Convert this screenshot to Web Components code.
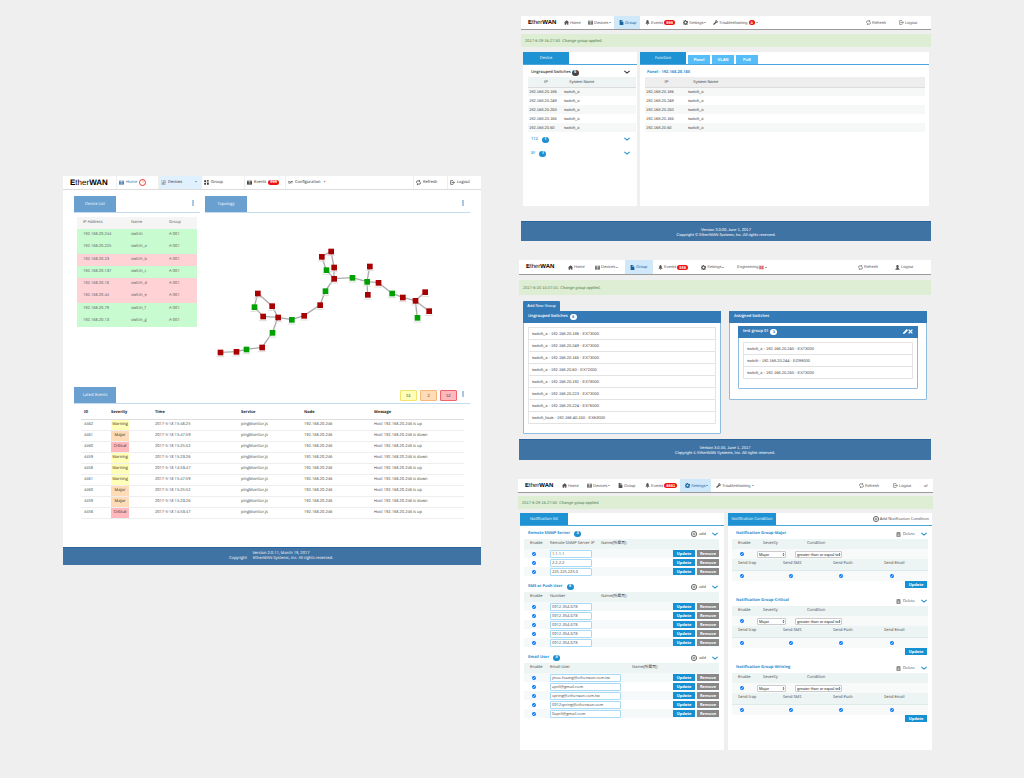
<!DOCTYPE html>
<html lang="en">
<head>
<meta charset="utf-8">
<title>EtherWAN network management screens</title>
<style>
  html { background: #efefef; }
  body { margin: 0; font: 4px/6px "Liberation Sans", Arial, sans-serif; color: #333; text-rendering: geometricPrecision; }
</style>
</head>
<body>
<ew-board>
  <ew-screen slot="overview" class="overview">
    <ew-nav size="large" style="--cols:53px 42px 43px 43px 41px 1fr 34px 34px">
      <ew-nav-item icon="grid" label="Home" ring="1" tone="link"></ew-nav-item>
      <ew-nav-item icon="list" label="Devices" active plus></ew-nav-item>
      <ew-nav-item icon="tiles" label="Group"></ew-nav-item>
      <ew-nav-item icon="grid" label="Events" badge="999"></ew-nav-item>
      <ew-nav-item icon="lines" label="Configuration" plus="near"></ew-nav-item>
      <ew-nav-item icon="refresh" label="Refresh"></ew-nav-item>
      <ew-nav-item icon="exit" label="Logout"></ew-nav-item>
    </ew-nav>
    <ew-overview></ew-overview>
    <ew-footer version="Version 2.0.11, March 19, 2017" mark="&#8195;" style="--h:18px;--shift:18px;--face:'Open Sans'"></ew-footer>
  </ew-screen>

  <ew-screen slot="screens" style="--inset:0 2px 0 3px">
    <ew-nav style="--cols:38px 24px 31px 26px 38px 30px 1fr 33px 37px">
      <ew-nav-item icon="home" label="Home"></ew-nav-item>
      <ew-nav-item icon="grid" label="Devices" caret></ew-nav-item>
      <ew-nav-item icon="file" label="Group" active></ew-nav-item>
      <ew-nav-item icon="bell" label="Events" badge="999"></ew-nav-item>
      <ew-nav-item icon="gear" label="Settings" caret></ew-nav-item>
      <ew-nav-item icon="wrench" label="Troubleshooting" badge="4" caret></ew-nav-item>
      <ew-nav-item icon="refresh" label="Refresh"></ew-nav-item>
      <ew-nav-item icon="exit" label="Logout"></ew-nav-item>
    </ew-nav>
    <ew-alert>2017-6-29 16:27:50&nbsp; Change group applied</ew-alert>
    <ew-group-view></ew-group-view>
    <ew-footer version="Version 3.0.00, June 1, 2017" mark="&copy;" style="--h:20px;--face:Lato"></ew-footer>
  </ew-screen>

  <ew-screen slot="screens" style="--inset:0 2px 0 1px">
    <ew-nav style="--h:15px;--cols:44px 27px 35px 28px 43px 36px 1fr 37px 41px">
      <ew-nav-item icon="home" label="Home"></ew-nav-item>
      <ew-nav-item icon="grid" label="Devices" caret></ew-nav-item>
      <ew-nav-item icon="file" label="Group" active></ew-nav-item>
      <ew-nav-item icon="bell" label="Events" badge="558"></ew-nav-item>
      <ew-nav-item icon="gear" label="Settings" caret></ew-nav-item>
      <ew-nav-item label="Engineering" tag="55" caret></ew-nav-item>
      <ew-nav-item icon="refresh" label="Refresh"></ew-nav-item>
      <ew-nav-item icon="user" label="Logout"></ew-nav-item>
    </ew-nav>
    <ew-alert style="--h:15px;--top:5px">2017-6-20 10:07:01: Change group applied.</ew-alert>
    <ew-assign-view></ew-assign-view>
    <ew-footer version="Version 3.0.00, June 1, 2017" mark="&copy;" style="--h:21px"></ew-footer>
  </ew-screen>

  <ew-screen slot="screens">
    <ew-nav style="--cols:39px 25px 31px 27px 40px 31px 1fr 34px 31px 14px">
      <ew-nav-item icon="home" label="Home"></ew-nav-item>
      <ew-nav-item icon="grid" label="Devices" caret></ew-nav-item>
      <ew-nav-item icon="file" label="Group"></ew-nav-item>
      <ew-nav-item icon="bell" label="Events" badge="8881"></ew-nav-item>
      <ew-nav-item icon="gear" label="Settings" active caret></ew-nav-item>
      <ew-nav-item icon="wrench" label="Troubleshooting" caret></ew-nav-item>
      <ew-nav-item icon="refresh" label="Refresh"></ew-nav-item>
      <ew-nav-item icon="exit" label="Logout"></ew-nav-item>
      <ew-nav-item label="uf"></ew-nav-item>
    </ew-nav>
    <ew-alert style="--top:3px">2017-6-29 16:27:50&nbsp; Change group applied</ew-alert>
    <ew-settings-view></ew-settings-view>
  </ew-screen>
</ew-board>

<script>
const ICONS = {
  home: '<path d="M8 1 0 8h2v7h5v-4h3v4h4V8h2l-3-3V2h-2v2z"/>',
  grid: '<path d="M0 2h16v12H0zM2 4v2h3V4zm4.500 0v2h3V4zM11 4v2h3V4zM2 7v2h3V7zm4.500 0v2h3V7zM11 7v2h3V7zM2 10v2h3v-2zm4.500 0v2h3v-2zm4.500 0v2h3v-2z" fill-rule="evenodd"/>',
  list: '<path d="M1 3h3M6 3h9M3 8l3 3 3-5M11 8h4M1 13h14" fill="none" stroke="currentColor" stroke-width="1.500"/>',
  lines: '<path d="M0 5h7M9 5h7M0 9h5M7 9h7M4 12l8-9" fill="none" stroke="currentColor" stroke-width="1.500"/>',
  tiles: '<path d="M1 1h5v5H1zM9 1h6v2H9zM9 5h6v2H9zM1 9h5v6H1zM10 9h5v6h-5z"/>',
  file: '<path d="M2 0h6v6h6v10H2zM9 0l5 5H9z"/>',
  bell: '<path d="M8 0c3 1 4 4 4 7 0 2 1 3 3 5H1c2-2 3-3 3-5 0-3 1-6 4-7zM6 13h4l-2 3z"/>',
  gear: '<path d="M6.500 0h3l.5 2.500 2 1L14 2l2 2-1.500 2 .5 1.500 1 .5v2l-2 .5-.5 1.500L15 14l-2 2-2-1.500-1.500.5-.5 1H7l-.5-1.500-2-.5L2.500 15 1 13l1-2-.5-1.500L0 9V7l2-.5.5-1.500L1 3l2-2 2 1.500 1-.5zM8 5a3 3 0 1 0 0 6 3 3 0 0 0 0-6z" fill-rule="evenodd"/>',
  wrench: '<path d="M11 0c1 0 1.500 0 2 .5L10.500 3l.5 2 2 .5L15.500 3c1 3-1 6-4.500 5.500L4 15.500c-2 1-4-1-3.500-3L7.500 6C7 3 8.500.5 11 0z"/>',
  refresh: '<path d="M2 9V5q0-2 2-2h7M14 7v4q0 2-2 2H5" fill="none" stroke="currentColor" stroke-width="2"/><path d="M10 0l4 3-4 3zM6 10l-4 3 4 3z"/>',
  exit: '<path d="M10 2H2v12h8M5 8h9M11 4l4 4-4 4" fill="none" stroke="currentColor" stroke-width="1.800"/>',
  user: '<path d="M8 0c3 0 4 2 4 4s-1 4-2 5c1 2 5 2 5 6H1c0-4 4-4 5-6-1-1-2-3-2-5s1-4 4-4z"/>',
  pencil: '<path d="M12 0l4 4L5 15l-5 1 1-5z"/>',
  cross: '<path d="M2 2l12 12M14 2 2 14" fill="none" stroke="currentColor" stroke-width="4"/>',
  chevron: '<path d="M1 5l7 6 7-6" fill="none" stroke="currentColor" stroke-width="3"/>',
  plus: '<circle cx="8" cy="8" r="7" fill="none" stroke="currentColor" stroke-width="2"/><path d="M8 4v8M4 8h8" stroke="currentColor" stroke-width="1.500"/>',
  trash: '<path d="M3 4h10v11H3zM2 1h12M6 6v6M10 6v6" fill="none" stroke="currentColor" stroke-width="2"/>',
  more: '<circle cx="8" cy="2.500" r="2"/><circle cx="8" cy="8" r="2"/><circle cx="8" cy="13.500" r="2"/>',
  updown: '<path d="M8 0l5 7H3zM8 16 3 9h10z"/>'
};

/* Registers an element whose open shadow root is filled from a template. */
function element(name, markup) {
  customElements.define(name, class extends HTMLElement {
    connectedCallback() {
      if (this.shadowRoot) return;
      const t = document.createElement('template');
      t.innerHTML = '<style>*{box-sizing:border-box}:host{display:block;box-sizing:border-box}:host([hidden]){display:none}' +
        'button,input,select{font:inherit;color:inherit;margin:0;padding:0;border:0;background:none;border-radius:0}' +
        'a{color:inherit;text-decoration:none}h2,h3,p,ul{margin:0;padding:0;font:inherit;list-style:none}' +
        'table{width:100%;table-layout:fixed;border-collapse:collapse}th,td{padding:0;text-align:left;font-weight:inherit;white-space:nowrap}' +
        '</style>' + (typeof markup === 'function' ? markup(this) : markup);
      this.attachShadow({ mode: 'open' }).append(t.content.cloneNode(true));
    }
  });
}
const icon = (name) => `<ew-icon name="${name}"></ew-icon>`;
const cols = (...w) => '<colgroup>' + w.map(x => `<col${x ? ` style="width:${x}px"` : ''}>`).join('') + '</colgroup>';

element('ew-board', `<style>
  :host{display:grid;grid-template-columns:418fr 415fr;column-gap:37px;padding:16px 91px 27px 63px;align-items:start}
  .left{padding-top:160px}
  .right{display:flex;flex-direction:column;gap:19px}
</style><div class="left"><slot name="overview"></slot></div><div class="right"><slot name="screens"></slot></div>`);

element('ew-screen', `<style>
  :host{margin:var(--inset,0)}
  :host(.overview){background:#fff}
</style><slot></slot>`);

element('ew-icon', (h) => `<style>
  :host{display:inline-block;width:var(--icon,5px);height:var(--icon,5px);flex:none}
  svg{display:block;width:100%;height:100%}
</style><svg viewBox="0 0 16 16" fill="currentColor" aria-hidden="true">${ICONS[h.getAttribute('name')]}</svg>`);

element('ew-nav', `<style>
  :host{background:#fff}
  nav{display:grid;grid-template-columns:var(--cols);height:var(--h,14px);border-bottom:1px solid #9a9a9a}
  .logo{padding-left:7px;font-size:6px;align-self:center;color:#000}
  :host([size=large]) .logo{font-size:8px;font-family:"Liberation Sans",sans-serif}
  :host([size=large]) nav{border-color:#dcdcdc;font-family:"Open Sans",sans-serif}
  b{font-weight:700}
</style><nav><a class="logo" href="#"><b>E</b>ther<b>WAN</b></a><slot></slot></nav>`);

element('ew-nav-item', (h) => {
  const a = (n) => h.getAttribute(n);
  return `<style>
  :host{display:flex;color:#555}
  :host([active]){background:#cfe9fb;color:#17639f}
  a{display:flex;align-items:center;gap:1px;flex:1;padding-left:5px;white-space:nowrap}
  :host-context([size=large]){color:#222;border-left:1px solid #eee}
  :host-context([size=large]) a{padding-left:2px;gap:2px}
  :host-context([size=large]):host([active]){background:#e0f0fd}
  :host([tone=link]){color:#2a6ca5}
  .badge{background:#e11;color:#fff;border-radius:3px;padding:0 2px;font-weight:700;line-height:5px}
  .tag{background:#fbd5d5;color:#c22;font-weight:700;line-height:5px}
  .ring{border:1px solid #e33;color:#e33;border-radius:50%;width:7px;height:7px;line-height:5px;text-align:center}
  .caret{border:1px solid transparent;border-top-color:currentColor;margin-top:1px}
  .plus{margin-left:auto;padding-right:4px}
  .near{margin-left:1px}
</style><a href="#">${a('icon') ? icon(a('icon')) : ''}<span>${a('label')}</span>${
    a('badge') ? `<span class="badge">${a('badge')}</span>` : ''}${
    a('tag') ? `<span class="tag">${a('tag')}</span>` : ''}${
    a('ring') ? `<span class="ring">${a('ring')}</span>` : ''}${
    h.hasAttribute('caret') ? '<span class="caret"></span>' : ''}${
    h.hasAttribute('plus') ? `<span class="${a('plus') || 'plus'}">+</span>` : ''}</a>`;
});

element('ew-alert', `<style>
  :host{margin-top:var(--top,4px);height:var(--h,13px);padding-left:4px;background:#deeed5;color:#4b7a4b;display:flex;align-items:center}
</style><p role="status"><slot></slot></p>`);

element('ew-footer', (h) => `<style>
  :host{height:var(--h);padding-left:var(--shift,0);background:#3f73a4;border-top:1px solid #2b649c;color:#fff;
    display:flex;flex-direction:column;justify-content:center;text-align:center;font-family:var(--face,"Liberation Sans"),sans-serif;line-height:5px}
</style><p>${h.getAttribute('version')}</p><p>Copyright ${h.getAttribute('mark')} EtherWAN Systems, Inc. All rights reserved.</p>`);

/* A white panel with a title tab that stands on a coloured rule. */
element('ew-panel', (h) => `<style>
  :host{background:#fff}
  header{display:flex;align-items:flex-end;gap:2px;height:var(--bar,13px);border-bottom:1px solid var(--rule,#4aa7de)}
  h2{width:var(--tab,46px);height:100%;background:var(--tone,#1e92d2);color:#fff;font:4px "Open Sans",sans-serif;
    display:flex;align-items:center;justify-content:center}
  .tools{margin-left:auto;align-self:center}
</style><header><h2>${h.getAttribute('heading')}</h2><slot name="tabs"></slot><div class="tools"><slot name="tools"></slot></div></header><slot></slot>`);

/* ---------- Overview ---------- */
const G = '#c9fbd0', R = '#ffd3d6';
const DEVICES = [['244', 'switch', G], ['225', 'switch_a', G], ['23', 'switch_b', R], ['137', 'switch_c', G],
  ['18', 'switch_d', R], ['44', 'switch_e', R], ['79', 'switch_f', G], ['13', 'switch_g', G]];
element('ew-device-list', `<style>
  :host{padding:4px 3px 0;font:4px/6px "Open Sans",sans-serif;color:#555}
  table{height:110px}
  th,td{height:12px}
  thead{background:#f5f5f5}
  th:first-child,td:first-child{padding-left:6px}
</style><table>${cols(54, 38, 0)}<thead><tr><th>IP Address</th><th>Name</th><th>Group</th></tr></thead><tbody>${
  DEVICES.map(d => `<tr style="background:${d[2]}"><td>192.168.20.${d[0]}</td><td>${d[1]}</td><td>A-001</td></tr>`).join('')}</tbody></table>`);

const NODES = [[46,352,0],[94,350,0],[124,343,1],[171,337,0],[202,293,1],[219,247,0],[174,244,0],[148,216,1],[158,175,0],[201,213,0],
  [260,254,1],[297,242,0],[345,210,0],[361,168,1],[387,131,0],[364,105,1],[350,65,0],[378,49,0],[387,97,0],[442,128,1],[486,140,1],
  [494,94,0],[488,179,0],[520,143,0],[561,175,1],[593,187,0],[631,197,0],[660,171,0],[672,228,0],[637,248,1]];
const LINKS = [[0,1],[1,2],[2,3],[3,4],[4,5],[5,6],[6,7],[7,8],[8,9],[9,5],[5,10],[10,11],[11,12],[12,13],[13,14],[14,15],[15,16],
  [16,17],[17,18],[18,14],[14,19],[19,20],[20,21],[20,22],[20,23],[23,24],[24,25],[25,26],[26,27],[26,28],[26,29]];
element('ew-topology', `<style>:host{padding-top:22px}svg{display:block;width:100%}</style>
<svg viewBox="0 0 795 390" role="img" aria-label="Network topology">
<g stroke="#aaa" stroke-width="4">${LINKS.map(([a, b]) => `<line x1="${NODES[a][0]}" y1="${NODES[a][1]}" x2="${NODES[b][0]}" y2="${NODES[b][1]}"/>`).join('')}</g>
${NODES.map(([x, y, up]) => `<path d="M${x - 12} ${y + 13}h24" stroke="#ddd" stroke-width="3"/><rect x="${x - 8}" y="${y - 8}" width="17" height="17" fill="${up ? '#00a000' : '#a80000'}"/>`).join('')}</svg>`);

const EVENTS = [['4462', 'Warning', '15:48:25', 'up'], ['4461', 'Major', '15:47:59', 'down'], ['4460', 'Critical', '15:25:52', 'up'],
  ['4459', 'Warning', '15:23:26', 'down'], ['4458', 'Warning', '14:53:47', 'up'], ['4461', 'Warning', '15:47:59', 'down'],
  ['4460', 'Major', '15:25:52', 'up'], ['4459', 'Major', '15:23:26', 'down'], ['4458', 'Critical', '14:53:47', 'up']];
element('ew-event-table', `<style>
  :host{padding:3px 6px 28px 7px;font-family:"Open Sans",sans-serif}
  th{font-weight:700;color:#222;height:12px;border-bottom:1px solid #ddd}
  td{height:11px;border-bottom:1px solid #eee;color:#444}
  th,td{padding-left:3px}
  th:nth-child(2),td:nth-child(2){padding-left:0}
  span{display:block;width:18px;height:11px;line-height:10px;text-align:center;color:#222;margin-bottom:-1px}
  .Warning{background:#ffffb8}.Major{background:#ffdcb8}.Critical{background:#ffb9bd}
</style><table>${cols(30, 41, 86, 63, 70, 0)}<thead><tr><th>ID</th><th>Severity</th><th>Time</th><th>Service</th><th>Node</th><th>Message</th></tr></thead><tbody>${
  EVENTS.map(e => `<tr><td>${e[0]}</td><td><span class="${e[1]}">${e[1]}</span></td><td>2017-5-18 ${e[2]}</td><td>pingMonitor.js</td><td>192.168.20.246</td><td>Host 192.168.20.246 is ${e[3]}</td></tr>`).join('')}</tbody></table>`);

element('ew-overview', `<style>
  :host{padding:6px 11px 0}
  .top{display:grid;grid-template-columns:126fr 265fr;gap:5px;min-height:191px}
  ew-panel{--tab:42px;--bar:17px;--tone:#6aa0d0;--rule:#c4dcf0}
  button{display:block}
  .more{--icon:6px;color:#2f6ea8;margin-right:4px}
  .tools{display:flex;align-items:center;gap:3px}
  .count{width:17px;height:11px;border:1px solid;border-radius:1px;color:#333;line-height:5px}
  .w{background:#ffffb8;border-color:#f4e36a}.m{background:#ffdcb8;border-color:#f7b877}.c{background:#ffb9bd;border-color:#f0656c}
</style>
<div class="top">
  <ew-panel heading="Device List"><button slot="tools" class="more" aria-label="Device list menu">${icon('more')}</button><ew-device-list></ew-device-list></ew-panel>
  <ew-panel heading="Topology"><button slot="tools" class="more" aria-label="Topology menu">${icon('more')}</button><ew-topology></ew-topology></ew-panel>
</div>
<ew-panel heading="Latest Events"><div slot="tools" class="tools"><button class="count w">51</button><button class="count m">2</button><button class="count c">52</button><button class="more" aria-label="Events menu">${icon('more')}</button></div>
<ew-event-table></ew-event-table></ew-panel>`);

/* ---------- Group view ---------- */
element('ew-switch-table', (h) => `<style>
  thead{background:var(--head,#eef4f4);border-bottom:1px solid #ddd}
  th{height:10px;color:#444} td{height:9px;color:#444}
  tbody tr:nth-child(odd){background:#f6f7f7}
  th:first-child{text-align:center}td:first-child{padding-left:1px}
  .name{padding-left:5px}
</style><table>${cols(+h.getAttribute('first') || 36, 0)}<thead><tr><th>IP</th><th class="name">System Name</th></tr></thead><tbody>${
  ['186', '249', '250', '165', '60'].map(n => `<tr><td>192.168.20.${n}</td><td>switch_a</td></tr>`).join('')}</tbody></table>`);

element('ew-count', `<style>
  :host{display:inline-block;min-width:7px;padding:0 2px;border-radius:3px;background:var(--fill,#1e8fd0);color:var(--ink,#fff);font-weight:700;line-height:6px;text-align:center}
</style><slot></slot>`);

element('ew-group-view', `<style>
  :host{display:grid;grid-template-columns:114fr 289fr;gap:3px;padding:5px 2px 15px}
  ew-panel{min-height:154px}
  .row{display:flex;align-items:center;gap:4px;height:14px;padding:0 7px 0 8px;color:#1e8fd0;font:600 4px/6px "Open Sans",sans-serif}
  .first{height:12px;padding-top:3px;gap:1px;color:#333;--fill:#444}
  .row button{margin-left:auto;--icon:6px}
  .left ew-switch-table{padding:0 1px 1px 5px}
  .right ew-switch-table{padding:0 4px 0 5px;--head:#eee}
  .tab{width:22px;height:9px;background:#55bdf8;color:#fff;font-weight:700;line-height:9px}
  .panel{height:12px;padding:3px 0 0 7px;color:#1e8fd0;font:700 4px/9px "Open Sans",sans-serif}
</style>
<ew-panel class="left" heading="Device">
  <div class="row first"><h3>Ungrouped Switches</h3><ew-count>5</ew-count><button aria-label="Toggle ungrouped switches">${icon('chevron')}</button></div>
  <ew-switch-table></ew-switch-table>
  <div class="row"><h3>T12</h3><ew-count>1</ew-count><button aria-label="Toggle T12">${icon('chevron')}</button></div>
  <div class="row"><h3>SF</h3><ew-count>1</ew-count><button aria-label="Toggle SF">${icon('chevron')}</button></div>
</ew-panel>
<ew-panel class="right" heading="Function">
  <button slot="tabs" class="tab">Panel</button><button slot="tabs" class="tab">VLAN</button><button slot="tabs" class="tab">PoE</button>
  <h3 class="panel">Panel - 192.168.20.185</h3>
  <ew-switch-table first="43"></ew-switch-table>
</ew-panel>`);

/* ---------- Assignment view ---------- */
element('ew-box', (h) => `<style>
  :host{background:#fff;border:1px solid #8fbde0;border-radius:1px}
  header{display:flex;align-items:center;gap:2px;height:12px;margin:-1px -1px 0;padding:0 5px;background:#337ab7;color:#fff;--fill:#fff;--ink:#337ab7}
  h2{font:600 4px/6px "Open Sans",sans-serif}
  .tools{margin-left:auto;display:flex}
</style><header><h2>${h.getAttribute('heading')}</h2>${h.getAttribute('count') ? `<ew-count>${h.getAttribute('count')}</ew-count>` : ''}<div class="tools"><slot name="tools"></slot></div></header><slot></slot>`);

element('ew-switch-list', (h) => `<style>
  ul{border:1px solid #e4e4e4;border-bottom:0;margin:4px 4px 0}
  li{height:12px;line-height:11px;padding-left:3px;border-bottom:1px solid #e2e2e2;color:#444;white-space:nowrap}
</style><ul>${h.getAttribute('items').split('|').map(s => `<li>${s}</li>`).join('')}</ul>`);

element('ew-assign-view', `<style>
  :host{padding:6px 4px 5px}
  .add{display:block;width:37px;height:10px;background:#337ab7;color:#fff;border-radius:1px 1px 0 0}
  .cols{display:grid;grid-template-columns:1fr 1fr;gap:8px;align-items:start}
  .all{min-height:123px}.assigned{min-height:89px}
  .inner{margin:3px 8px 10px;min-height:63px}
  button{--icon:5px}
</style>
<button class="add">Add New Group</button>
<div class="cols">
  <ew-box class="all" heading="Ungrouped Switches" count="8"><ew-switch-list items="switch_a - 192.168.20.186 - EX73000|switch_a - 192.168.20.249 - EX73000|switch_a - 192.168.20.165 - EX73000|switch_a - 192.168.20.60 - EX72000|switch_a - 192.168.20.192 - EX78000|switch_a - 192.168.20.223 - EX73000|switch_a - 192.168.20.224 - EX76000|switch_louis - 192.168.40.150 - EX63000"></ew-switch-list></ew-box>
  <ew-box class="assigned" heading="Assigned Switches">
    <ew-box class="inner" heading="test group 01" count="3"><button slot="tools" aria-label="Edit group">${icon('pencil')}</button><button slot="tools" aria-label="Delete group">${icon('cross')}</button>
    <ew-switch-list items="switch_a - 192.168.20.240 - EX73000|switch - 192.168.20.244 - EG99000|switch_a - 192.168.20.250 - EX73000"></ew-switch-list></ew-box>
  </ew-box>
</div>`);

/* ---------- Settings view ---------- */
const FORM = `<style>
  :host{font:4px/6px "Open Sans","Noto Sans CJK TC",sans-serif;color:#444}
  .head{display:flex;align-items:center;height:12px;padding:2px 1px 0 4px}
  h3{color:#1e8fd0;font-weight:700}
  .head ew-count{margin-left:4px;font-weight:700}
  .act{margin-left:auto;display:flex;align-items:center;gap:2px;--icon:6px}
  .open{color:#1e8fd0;--icon:6px;margin-left:6px;display:block}
  ew-icon{display:block}
  thead{background:#edf4f4}
  input[type=checkbox]{width:4px;height:4px;display:block}
  .go{width:22px;height:7px;background:#1590d2;color:#fff;font-weight:700;line-height:7px;display:block}
  .off{background:#888}
</style>`;

element('ew-user-section', (h) => {
  const field = h.getAttribute('field'), wide = h.hasAttribute('wide');
  return FORM + `<style>
    th{height:10px} td{height:9px}
    th:first-child{padding-left:6px}td:first-child{padding-left:8px}
    tbody tr:nth-child(odd){background:#f6f9f9}
    .txt{display:block;width:${wide ? 71 : 42}px;height:8px;border:1px solid #a9daf5;border-radius:1px;background:#fff;padding-left:1px;font:4px/6px "Open Sans",sans-serif}
    .two{display:flex;gap:2px}
  </style><div class="head"><h3>${h.getAttribute('heading')}</h3><ew-count>${h.getAttribute('count')}</ew-count>
  <button class="act">${icon('plus')}<span>add</span></button><button class="open" aria-label="Toggle section">${icon('chevron')}</button></div>
  <table>${cols(26, wide ? 82 : 51, 0, 46)}<thead><tr><th>Enable</th><th>${field}</th><th>Name(所屬司)</th><th></th></tr></thead><tbody>${
    h.getAttribute('values').split('|').map(v => `<tr><td><input type="checkbox" checked aria-label="Enable ${v}"></td><td><input class="txt" type="text" aria-label="${field}" value="${v}"></td><td></td><td><div class="two"><button class="go">Update</button><button class="go off">Remove</button></div></td></tr>`).join('')}</tbody></table>`;
});

element('ew-condition-group', (h) => FORM + `<style>
    th,td{padding-left:6px}
    .a th{height:10px}.a td{height:10px}.b th{height:11px}.b td{height:11px}
    .b thead tr{border-bottom:1px solid #dcebea}
    tbody{background:#f8fafa}
    td input{margin-left:2px}
    .b td+td input{margin-left:6px}
    label{position:relative;display:block}
    select{appearance:none;width:100%;height:7px;border:1px solid #ccc;border-radius:1px;background:#fff;padding-left:1px;font:4px/5px "Liberation Sans",sans-serif;color:#222;display:block}
    label ew-icon{position:absolute;right:1px;top:2px;--icon:3px}
    .a th:nth-child(2){padding-left:7px}.a th:nth-child(3){padding-left:13px}
    .a td+td{padding-left:1px}
    .sev{width:29px}.con{width:47px}
    .end{display:flex;justify-content:flex-end;padding-right:1px}
    .del{--icon:5px}
  </style><div class="head"><h3>${h.getAttribute('heading')}</h3><button class="act del">${icon('trash')}<span>Delete</span></button><button class="open" aria-label="Toggle group">${icon('chevron')}</button></div>
  <table class="a">${cols(24, 38, 0)}<thead><tr><th>Enable</th><th>Severity</th><th>Condition</th></tr></thead>
  <tbody><tr><td><input type="checkbox" checked aria-label="Enable"></td>
  <td><label class="sev"><select aria-label="Severity"><option>Major</option></select>${icon('updown')}</label></td>
  <td><label class="con"><select aria-label="Condition"><option>greater than or equal to</option></select>${icon('updown')}</label></td></tr></tbody></table>
  <table class="b">${cols(45, 50, 51, 0)}<thead><tr><th>Send trap</th><th>Send SMS</th><th>Send Push</th><th>Send Email</th></tr></thead>
  <tbody><tr>${['trap', 'SMS', 'Push', 'Email'].map(k => `<td><input type="checkbox" checked aria-label="Send ${k}"></td>`).join('')}</tr></tbody></table>
  <div class="end"><button class="go">Update</button></div>`);

element('ew-settings-view', `<style>
  :host{display:grid;grid-template-columns:1fr 1fr;gap:4px;padding:4px 1px 0 2px}
  ew-panel{min-height:237px;--tab:48px}
  .stack{display:flex;flex-direction:column;gap:4px;padding:1px 5px 0 4px}
  .groups{gap:6px;padding-right:4px}
  .add{display:flex;align-items:center;gap:1px;--icon:6px;font:4px/6px "Open Sans",sans-serif;margin-right:3px;color:#444}
</style>
<ew-panel heading="Notification list"><div class="stack">
  <ew-user-section heading="Remote SNMP Server" count="3" field="Remote SNMP Server IP" values="1.1.1.1|2.2.2.2|225.225.225.0"></ew-user-section>
  <ew-user-section heading="SMS or Push User" count="5" field="Number" values="0912-354-678|0912-354-678|0912-354-678|0912-354-678|0912-354-678"></ew-user-section>
  <ew-user-section wide heading="Email User" count="5" field="Email User" values="jinae.huang@etherwan.com.tw|april@gmail.com|spring@etherwan.com.tw|0912spring@etherwan.com|0april@gmail.com"></ew-user-section>
</div></ew-panel>
<ew-panel heading="Notification Condition"><button slot="tools" class="add">${icon('plus')}<span>Add Notification Condition</span></button><div class="stack groups">
  <ew-condition-group heading="Notification Group-Major"></ew-condition-group>
  <ew-condition-group heading="Notification Group-Critical"></ew-condition-group>
  <ew-condition-group heading="Notification Group-Wrining"></ew-condition-group>
</div></ew-panel>`);
</script>
</body>
</html>
